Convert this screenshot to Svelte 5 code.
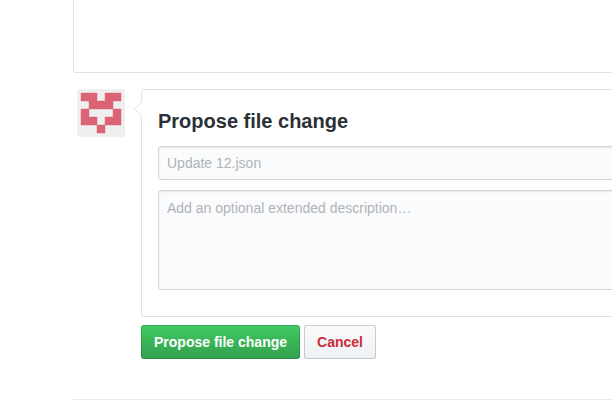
<script>
  const cells = ['11011', '01110', '10001', '11011', '00100'];
  const squares = cells.flatMap((row, y) =>
    [...row].flatMap((on, x) => (on === '1' ? [`M${4 + x * 8} ${4 + y * 8}h8v8h-8z`] : []))
  ).join('');
</script>

<div class="page">
  <main class="container">
    <div class="editor"></div>
    <form class="commit" onsubmit={(e) => e.preventDefault()}>
      <svg class="avatar" width="48" height="48" viewBox="0 0 48 48" aria-hidden="true">
        <rect width="48" height="48" fill="#efefef" />
        <path d={squares} fill="none" stroke="#e4a0aa" stroke-width=".8" />
        <path d={squares} fill="#da6476" shape-rendering="crispEdges" />
      </svg>
      <div class="column">
        <div class="box">
          <svg class="caret" width="8" height="16" viewBox="0 0 8 16" aria-hidden="true">
            <path d="M8 0L0 8L8 16Z" fill="#fff" />
            <path d="M8 .5L.7 8L8 15.5" fill="none" stroke="#dfe2e5" />
          </svg>
          <h3>Propose file change</h3>
          <input type="text" placeholder="Update 12.json" />
          <textarea placeholder="Add an optional extended description…"></textarea>
        </div>
        <div class="actions">
          <button class="btn primary" type="submit">Propose file change</button>
          <button class="btn danger" type="button">Cancel</button>
        </div>
      </div>
    </form>
    <footer></footer>
  </main>
</div>

<style>
  :global(body) {
    margin: 0;
    background: #fff;
  }
  .page {
    height: 406px;
    overflow: hidden;
    box-sizing: border-box;
    padding-left: 73px;
    font: 14px/21px "Liberation Sans", Arial, sans-serif;
    color: #2b3036;
  }
  .page * {
    box-sizing: border-box;
  }
  .container {
    width: 980px;
  }
  .editor {
    height: 73px;
    border: 1px solid #e0e2e6;
    border-top: 0;
    border-radius: 0 0 3px 3px;
  }
  .commit {
    display: flex;
    gap: 16px;
    margin: 16px 0 0;
    padding-left: 4px;
  }
  .avatar {
    flex: none;
    border-radius: 3px;
  }
  .column {
    flex: 1;
  }
  .box {
    position: relative;
    height: 228px;
    padding: 16px;
    border: 1px solid #e0e2e6;
    border-radius: 3px;
  }
  .caret {
    position: absolute;
    left: -8px;
    top: 11px;
  }
  h3 {
    margin: 0 0 10px;
    font-size: 20px;
    font-weight: 600;
    line-height: 30px;
  }
  input,
  textarea {
    display: block;
    width: 100%;
    margin: 0;
    padding: 6px 8px;
    font: inherit;
    line-height: 20px;
    color: #24292e;
    background: #fafbfc;
    border: 1px solid #d1d4d9;
    border-radius: 3px;
    box-shadow: inset 0 1px 2px rgba(27, 31, 35, 0.075);
    resize: none;
    outline: none;
  }
  input {
    height: 34px;
    margin-bottom: 10px;
  }
  textarea {
    height: 100px;
    padding: 7px 8px;
    line-height: 21px;
  }
  input::placeholder,
  textarea::placeholder {
    color: #b0b3b8;
    opacity: 1;
  }
  .actions {
    display: flex;
    gap: 4px;
    margin-top: 8px;
  }
  .btn {
    height: 34px;
    margin: 0;
    padding: 6px 12px;
    font: 600 14px/20px "Liberation Sans", Arial, sans-serif;
    white-space: nowrap;
    border: 1px solid rgba(27, 31, 35, 0.2);
    border-radius: 3px;
  }
  .primary {
    color: #fff;
    background: #34a34f linear-gradient(-180deg, #3fcc63, #34a34f 90%) border-box;
  }
  .danger {
    color: #cb2b38;
    background: #fafbfc linear-gradient(-180deg, #fafbfc, #eff3f6 90%) border-box;
  }
  footer {
    margin-top: 40px;
    border-top: 1px solid #eaeaec;
  }
</style>
